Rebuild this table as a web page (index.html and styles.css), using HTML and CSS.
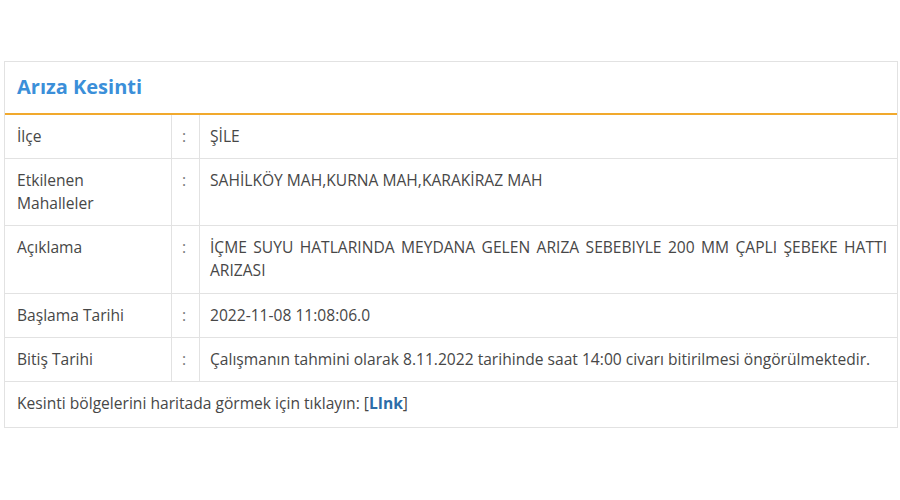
FILE: index.html
```html
<!DOCTYPE html>
<html lang="tr">
<head>
<meta charset="utf-8">
<link rel="stylesheet" href="styles.css">
</head>
<body>
<div class="panel">
  <div class="panel-head">Arıza Kesinti</div>
  <table class="info">
    <tr>
      <td class="lbl">İlçe</td>
      <td class="sep">:</td>
      <td class="val">ŞİLE</td>
    </tr>
    <tr>
      <td class="lbl">Etkilenen<br>Mahalleler</td>
      <td class="sep">:</td>
      <td class="val">SAHİLKÖY MAH,KURNA MAH,KARAKİRAZ MAH</td>
    </tr>
    <tr class="tall">
      <td class="lbl">Açıklama</td>
      <td class="sep">:</td>
      <td class="val just">İÇME SUYU HATLARINDA MEYDANA GELEN ARIZA SEBEBIYLE 200 MM ÇAPLI ŞEBEKE HATTI ARIZASI</td>
    </tr>
    <tr>
      <td class="lbl">Başlama Tarihi</td>
      <td class="sep">:</td>
      <td class="val">2022-11-08 11:08:06.0</td>
    </tr>
    <tr>
      <td class="lbl">Bitiş Tarihi</td>
      <td class="sep">:</td>
      <td class="val">Çalışmanın tahmini olarak 8.11.2022 tarihinde saat 14:00 civarı bitirilmesi öngörülmektedir.</td>
    </tr>
    <tr class="last">
      <td class="lbl full" colspan="3">Kesinti bölgelerini haritada görmek için tıklayın: <a class="lnk" href="#">[<b>LInk</b>]</a></td>
    </tr>
  </table>
</div>
</body>
</html>
```
FILE: styles.css
```css
html, body {
  margin: 0;
  padding: 0;
  background: #fff;
}
body {
  font-family: "Open Sans", "Noto Sans", sans-serif;
  font-size: 15.6px;
  color: #474747;
  padding: 61px 2px 0 4px;
}
.panel {
  width: 894px;
  box-sizing: border-box;
  border: 1px solid #e2e2e2;
  border-bottom: none;
}
.panel-head {
  height: 53px;
  box-sizing: border-box;
  padding: 11px 12px 0 12px;
  font-size: 20px;
  font-weight: 700;
  color: #3b8fd9;
  line-height: 28px;
  border-bottom: 2px solid #f1a92d;
}
.info {
  width: 100%;
  border-collapse: collapse;
}
.info td {
  border-bottom: 1px solid #e2e2e2;
  padding: 10px 10px 10px 10px;
  line-height: 23px;
  vertical-align: top;
}
.info tr.tall td {
  padding-bottom: 11px;
}
.info tr.last td {
  padding-bottom: 12px;
}
.info td.lbl {
  width: 144px;
  padding-left: 12px;
  border-right: 1px solid #e2e2e2;
}
.info td.sep {
  width: 7px;
  border-right: 1px solid #e2e2e2;
  color: #777;
}
.info td.full {
  border-right: none;
}
.just {
  text-align: justify;
}
.lnk {
  color: #474747;
  text-decoration: none;
}
.lnk b {
  font-weight: 700;
  color: #2c6ca8;
}
```
